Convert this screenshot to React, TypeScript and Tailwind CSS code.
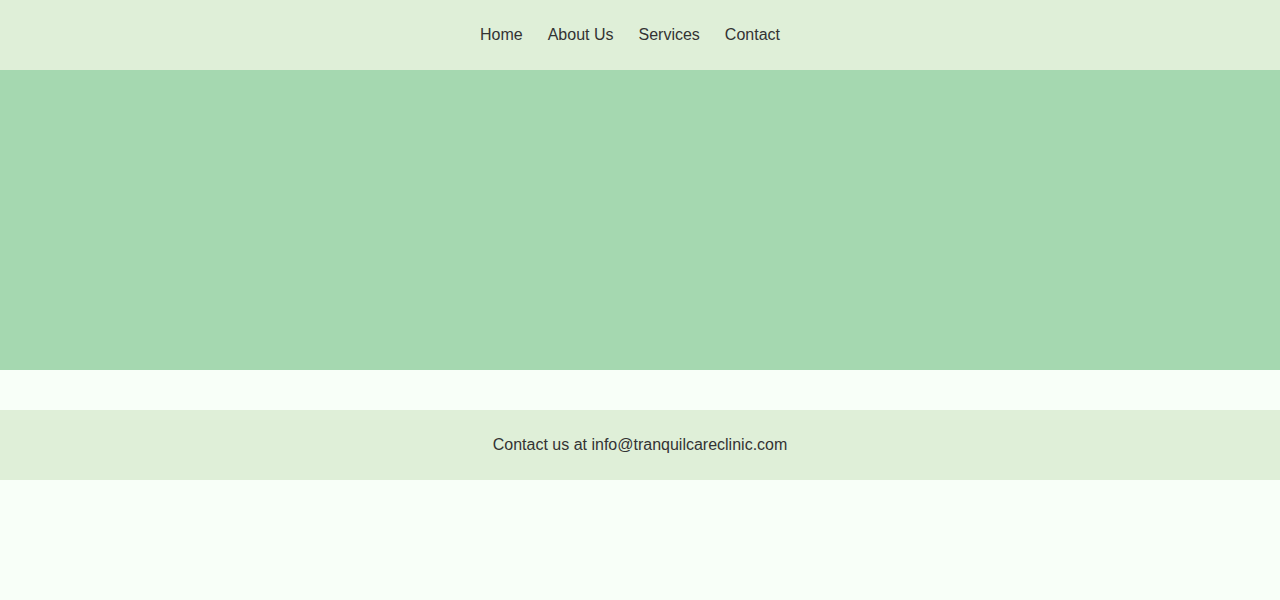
export default function App() {
  const links = ["Home", "About Us", "Services", "Contact"];

  return (
    <div className="min-h-[600px] bg-[#f8fff8] font-['Liberation_Sans',Arial,sans-serif] text-[16px] text-[#333]">
      <header className="flex h-[70px] items-center justify-center bg-[#dfefd8]">
        <nav className="flex gap-[25px] pr-[20px]">
          {links.map((link) => (
            <a key={link} href="#" className="text-[#333]">
              {link}
            </a>
          ))}
        </nav>
      </header>
      <section className="h-[300px] bg-[#a5d8b0]" />
      <footer className="mt-[40px] flex h-[70px] items-center justify-center bg-[#dfefd8]">
        <p>Contact us at info@tranquilcareclinic.com</p>
      </footer>
    </div>
  );
}
